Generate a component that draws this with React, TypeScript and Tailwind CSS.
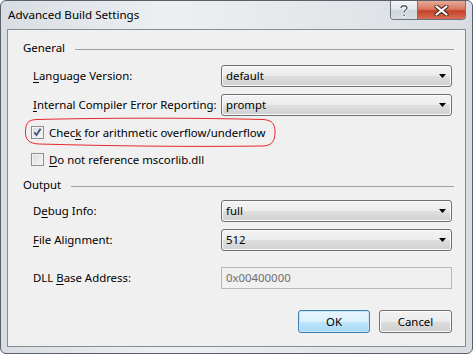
import React from "react";

const font = "font-['Noto_Sans',sans-serif]";

function Arrow() {
  return (
    <svg width="7" height="4" viewBox="0 0 7 4" className="shrink-0">
      <path d="M0 0H7L3.5 4Z" fill="#000" />
    </svg>
  );
}

function Combo({ value }: { value: string }) {
  return (
    <div className="flex h-[22px] w-[231px] items-center rounded-[3px] border border-[#707070] bg-[linear-gradient(#f3f3f3_0%,#ececec_48%,#dedede_52%,#d0d0d0_100%)] pl-[4px] pr-[5px] shadow-[inset_0_0_0_1px_#fafafa]">
      <span className="flex-1 whitespace-nowrap text-[11.4px] leading-none text-black">{value}</span>
      <Arrow />
    </div>
  );
}

function Check({ checked }: { checked: boolean }) {
  return (
    <div className="flex h-[13px] w-[13px] shrink-0 items-center justify-center border border-[#8e8f8f] bg-[linear-gradient(135deg,#d9dadb,#f7f7f7)] shadow-[inset_0_0_0_1px_#f4f4f4]">
      {checked && (
        <svg width="9" height="9" viewBox="0 0 9 9">
          <path d="M1.3 4.3L3.5 7L7.6 0.8" fill="none" stroke="#3f5687" strokeWidth="1.9" />
        </svg>
      )}
    </div>
  );
}

function Header({ title }: { title: string }) {
  return (
    <div className="flex h-[16px] items-center pl-[15px] pr-[11px]">
      <span className="whitespace-nowrap text-[11.4px] leading-none">{title}</span>
      <div className="ml-[10px] mt-[2px] h-px flex-1 bg-[#a0a0a0]" />
    </div>
  );
}

function Row({ label, children }: { label: React.ReactNode; children: React.ReactNode }) {
  return (
    <div className="flex items-center pl-[25px]">
      <div className="w-[188px] shrink-0 whitespace-nowrap text-[11.4px] leading-none">{label}</div>
      {children}
    </div>
  );
}

const U = ({ c }: { c: string }) => <span className="underline underline-offset-[2px]">{c}</span>;

export default function App() {
  return (
    <div className={`${font} relative flex h-[354px] w-[473px] flex-col overflow-hidden rounded-[6px] border border-[#596069] bg-[linear-gradient(90deg,#d8dde3_0%,#edf0f2_35%,#e6e9ec_60%,#d9dde2_100%)] text-black`}>
      {/* title bar */}
      <div className="flex h-[28px] shrink-0 justify-between pl-[7px] pr-[6px]">
        <span className="self-center whitespace-nowrap text-[11.6px] leading-none">Advanced Build Settings</span>
        <div className="flex h-[19px] overflow-hidden rounded-b-[4px] border border-t-0 border-[#6a7380]">
          <div className="flex w-[27px] items-center justify-center border-r border-[#6a7380] bg-[linear-gradient(#f2f4f6_0%,#e1e5ea_50%,#cfd5dc_51%,#d9dee4_100%)]">
            <svg width="10" height="13" viewBox="0 0 10 13">
              <path d="M2 4C2 1 8 1 8 4C8 6 5 6 5 8.5" fill="none" stroke="#fff" strokeWidth="3" />
              <path d="M2 4C2 1 8 1 8 4C8 6 5 6 5 8.5" fill="none" stroke="#555c66" strokeWidth="1.4" />
              <rect x="3.5" y="9.8" width="3" height="3" fill="#fff" />
              <rect x="4.2" y="10.5" width="1.6" height="1.6" fill="#555c66" />
            </svg>
          </div>
          <div className="flex w-[47px] items-center justify-center bg-[linear-gradient(#e9a99b_0%,#d9785f_45%,#c5412a_55%,#d86e50_100%)]">
            <svg width="15" height="11" viewBox="0 0 15 11">
              <path d="M2.5 1.5L12.5 9.5M12.5 1.5L2.5 9.5" stroke="#4a2a24" strokeWidth="4.2" strokeLinecap="round" />
              <path d="M2.5 1.5L12.5 9.5M12.5 1.5L2.5 9.5" stroke="#fff" strokeWidth="2.2" strokeLinecap="round" />
            </svg>
          </div>
        </div>
      </div>

      {/* client */}
      <div className="mx-[6px] flex h-[318px] shrink-0 flex-col border border-[#878c93] bg-[#f0f0f0]">
        <div className="mt-[10px]">
          <Header title="General" />
        </div>
        <div className="mt-[9px]">
          <Row label={<><U c="L" />anguage Version:</>}>
            <Combo value="default" />
          </Row>
        </div>
        <div className="mt-[7px]">
          <Row label={<><U c="I" />nternal Compiler Error Reporting:</>}>
            <Combo value="prompt" />
          </Row>
        </div>
        <div className="mt-[10px] flex items-center gap-[5px] pl-[23px]">
          <Check checked />
          <span className="whitespace-nowrap text-[11.4px] leading-none">
            Chec<U c="k" /> for arithmetic overflow/underflow
          </span>
        </div>
        <div className="mt-[14px] flex items-center gap-[5px] pl-[23px]">
          <Check checked={false} />
          <span className="whitespace-nowrap text-[11.4px] leading-none">
            <U c="D" />o not reference mscorlib.dll
          </span>
        </div>
        <div className="mt-[11px]">
          <Header title="Output" />
        </div>
        <div className="mt-[7px]">
          <Row label={<>D<U c="e" />bug Info:</>}>
            <Combo value="full" />
          </Row>
        </div>
        <div className="mt-[7px]">
          <Row label={<><U c="F" />ile Alignment:</>}>
            <Combo value="512" />
          </Row>
        </div>
        <div className="mt-[16px]">
          <Row label={<>DLL <U c="B" />ase Address:</>}>
            <div className="flex h-[22px] w-[231px] items-center border border-[#b5b9bd] bg-[#f0f0f0] pl-[4px] text-[11.4px] leading-none text-[#6d6d6d]">
              0x00400000
            </div>
          </Row>
        </div>
        <div className="mt-[21px] flex justify-end gap-[9px] pr-[13px]">
          <button className="flex h-[23px] w-[72px] items-center justify-center rounded-[3px] border border-[#3c7fb1] bg-[linear-gradient(#eaf6fd_0%,#d9f0fc_50%,#bee6fd_51%,#a7d9f5_100%)] text-[11.4px] leading-none shadow-[inset_0_0_0_1px_#c6e6f8]">
            OK
          </button>
          <button className="flex h-[23px] w-[73px] items-center justify-center rounded-[3px] border border-[#707070] bg-[linear-gradient(#f2f2f2_0%,#ebebeb_50%,#dddddd_51%,#cfcfcf_100%)] text-[11.4px] leading-none shadow-[inset_0_0_0_1px_#fbfbfb]">
            Cancel
          </button>
        </div>
      </div>

      {/* red annotation */}
      <svg className="pointer-events-none absolute left-0 top-0" width="473" height="354">
        <path
          d="M36 118.5 C120 116.5 200 117 262 118.5 C272 119 274 124 274 131 C274 140 271 144.5 262 145 C190 146 110 145 38 143 C27 142.5 24.5 138 24.5 131 C24.5 122 27 118.8 36 118.5 Z"
          fill="none"
          stroke="#e8262a"
          strokeWidth="1"
        />
      </svg>
    </div>
  );
}
